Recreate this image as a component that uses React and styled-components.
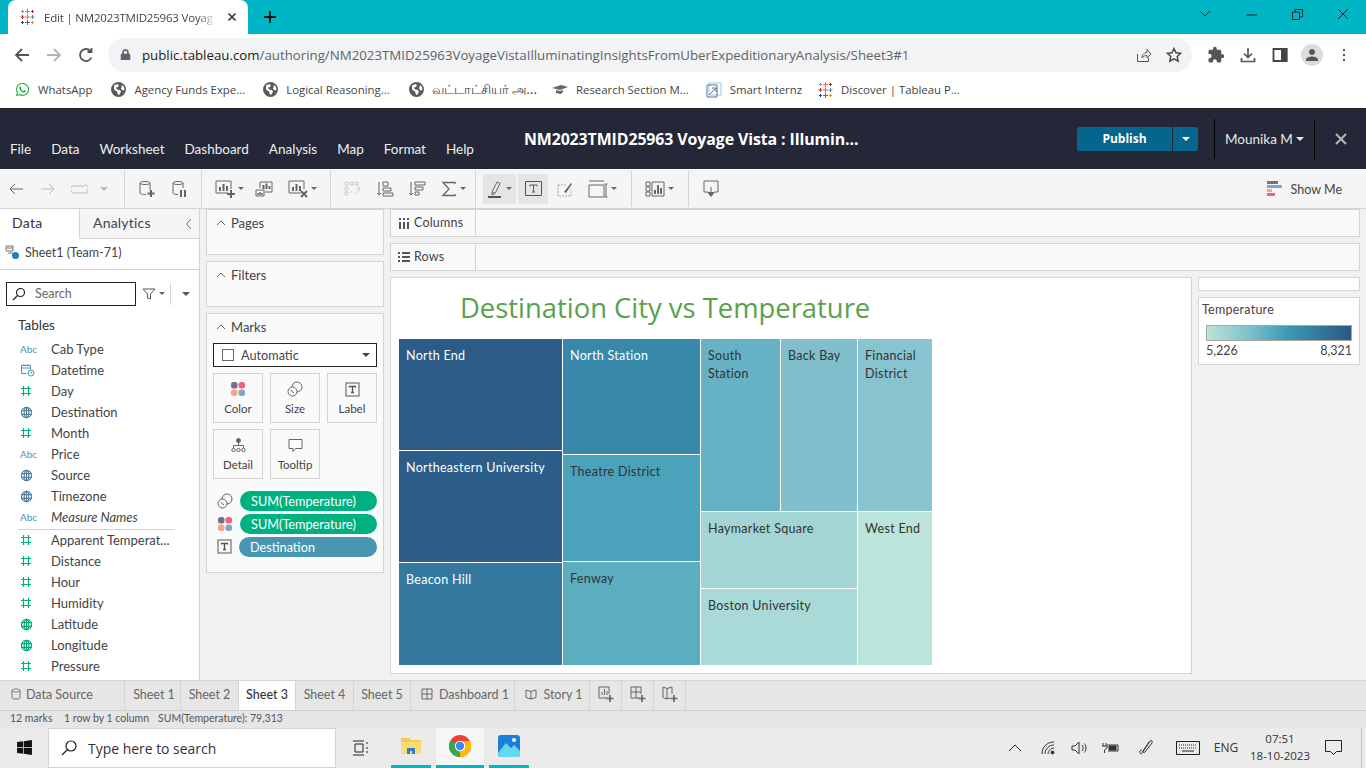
import React from 'react';
import styled, { createGlobalStyle } from 'styled-components';
import { FaWhatsapp, FaWindows, FaLock } from 'react-icons/fa';
import { MdExtension, MdPerson } from 'react-icons/md';

const Global = createGlobalStyle`
  html, body { margin: 0; padding: 0; height: 768px; overflow: hidden; background: #fff; }
  * { box-sizing: border-box; }
  body { font-family: "Lato", "Noto Sans", sans-serif; color: #333; }
`;

const Page = styled.div`
  width: 1366px;
  height: 768px;
  display: flex;
  flex-direction: column;
  overflow: hidden;
`;

/* browser chrome */
const TabStrip = styled.div`
  height: 34px;
  background: #00b5c4;
  display: flex;
  align-items: flex-end;
  padding-left: 8px;
`;
const BrowserTab = styled.div`
  width: 240px;
  height: 34px;
  background: #fff;
  border-radius: 8px 8px 0 0;
  display: flex;
  align-items: center;
  padding: 0 11px;
  font: 11.5px "Open Sans", sans-serif;
  letter-spacing: -0.2px;
  color: #444;
`;
const TabTitle = styled.span`
  margin-left: 9px;
  width: 172px;
  white-space: nowrap;
  mask-image: linear-gradient(to right, #000 90%, transparent);
`;
const TabClose = styled.span`
  margin-left: 11px;
  display: flex;
`;
const NewTab = styled.div`
  margin: 0 0 0 15px;
  height: 34px;
  display: flex;
  align-items: center;
`;
const WinButtons = styled.div`
  margin-left: auto;
  display: flex;
  align-items: center;
  height: 34px;
  padding-bottom: 6px;
`;
const WinBtn = styled.div`
  width: 46px;
  display: flex;
  justify-content: center;
`;
const UrlRow = styled.div`
  height: 40px;
  background: #fff;
  display: flex;
  align-items: center;
  padding: 2px 0 0 6px;
`;
const NavBtn = styled.div`
  width: 32px;
  display: flex;
  justify-content: center;
`;
const Omnibox = styled.div`
  margin-left: 6px;
  width: 1084px;
  height: 34px;
  border-radius: 17px;
  background: #f1f3f4;
  display: flex;
  align-items: center;
  padding: 0 10px 0 12px;
  font: 13.27px "Open Sans", sans-serif;
  color: #5f6368;
`;
const UrlHost = styled.span`
  margin-left: 11px;
  color: #222;
`;
const OmniIcons = styled.div`
  margin-left: auto;
  display: flex;
  gap: 14px;
  align-items: center;
`;
const BrowserIcons = styled.div`
  margin-left: 8px;
  display: flex;
  align-items: center;
`;
const Avatar = styled.div`
  width: 22px;
  height: 22px;
  border-radius: 50%;
  background: #dadce0;
  display: flex;
  align-items: center;
  justify-content: center;
`;
const Bookmarks = styled.div`
  height: 35px;
  background: #fff;
  display: flex;
  align-items: center;
  padding: 0 0 2px 15px;
  font: 11.4px "Open Sans", sans-serif;
  color: #444;
  border-bottom: 1px solid #222;
`;
const Bookmark = styled.div`
  display: flex;
  align-items: center;
  gap: 8px;
  margin-left: ${p => p.$ml || 0}px;
  white-space: nowrap;
`;
const TamilText = styled.span`
  font-family: "Noto Sans", "Open Sans", sans-serif;
  font-size: 13.4px;
`;

/* tableau header */
const Header = styled.header`
  height: 60px;
  background: #232738;
  display: flex;
  color: #fff;
`;
const Menu = styled.nav`
  display: flex;
  gap: 20px;
  padding: 32px 0 0 10px;
  font-size: 13.5px;
  color: #eee;
`;
const WorkbookTitle = styled.div`
  margin-left: 50px;
  padding-top: 19px;
  font: 700 15.9px "Open Sans", sans-serif;
  letter-spacing: -0.1px;
  white-space: nowrap;
`;
const HeaderRight = styled.div`
  margin-left: auto;
  display: flex;
  align-items: center;
`;
const Publish = styled.div`
  width: 95px;
  height: 24px;
  background: #05668d;
  border-radius: 2px 0 0 2px;
  font: 700 12px "Open Sans", sans-serif;
  display: flex;
  align-items: center;
  justify-content: center;
`;
const PublishArrow = styled.div`
  width: 25px;
  height: 24px;
  margin-left: 1px;
  background: #05668d;
  border-radius: 0 2px 2px 0;
  display: flex;
  align-items: center;
  justify-content: center;
`;
const HeaderSep = styled.div`
  width: 1px;
  height: 40px;
  background: #000;
  margin-left: ${p => p.$ml}px;
`;
const UserName = styled.div`
  margin-left: 10px;
  width: 89px;
  font-size: 13.5px;
  color: #e8e8e8;
  display: flex;
  align-items: center;
  gap: 3px;
`;
const CloseBtn = styled.div`
  width: 51px;
  display: flex;
  justify-content: center;
`;
const Caret = styled.span`
  display: inline-block;
  width: 0;
  height: 0;
  border-left: ${p => p.$s || 3}px solid transparent;
  border-right: ${p => p.$s || 3}px solid transparent;
  border-top: ${p => p.$s || 3}px solid ${p => p.$c || '#666'};
`;

/* toolbar */
const Toolbar = styled.div`
  height: 40px;
  padding-top: 1px;
  background: #f5f5f5;
  border-bottom: 1px solid #d4d4d4;
  display: flex;
  align-items: center;
`;
const ToolBtn = styled.div`
  width: ${p => p.$w}px;
  height: 30px;
  margin-left: ${p => p.$ml || 0}px;
  display: flex;
  align-items: center;
  justify-content: center;
  gap: 3px;
  background: ${p => (p.$on ? '#e5e5e5' : 'transparent')};
`;
const ToolSep = styled.div`
  width: 1px;
  height: 36px;
  background: #d4d4d4;
  margin-left: ${p => p.$ml}px;
`;
const ShowMe = styled.div`
  margin-left: auto;
  margin-right: 24px;
  padding-top: 1px;
  display: flex;
  align-items: center;
  gap: 9px;
  font-size: 12.5px;
  color: #444;
`;

/* main */
const Main = styled.div`
  height: 472px;
  background: #f1f1f1;
  display: flex;
`;
const DataPane = styled.aside`
  width: 200px;
  background: #fff;
  border-right: 1px solid #d4d4d4;
  overflow: hidden;
`;
const PaneTabs = styled.div`
  height: 30px;
  display: flex;
`;
const DataTab = styled.div`
  width: 80px;
  padding: 5px 0 0 12px;
  font-size: 14px;
  letter-spacing: 0.3px;
  color: #333;
  border-right: 1px solid #d4d4d4;
`;
const AnalyticsTab = styled.div`
  flex: 1;
  padding: 5px 6px 0 13px;
  font-size: 14px;
  letter-spacing: 0.2px;
  color: #444;
  background: #f5f5f5;
  border-bottom: 1px solid #d4d4d4;
  display: flex;
  justify-content: space-between;
  align-items: flex-start;
`;
const CollapseIcon = styled.span`
  display: flex;
  padding-top: 4px;
`;
const SourceRow = styled.div`
  height: 31px;
  border-bottom: 1px solid #d4d4d4;
  display: flex;
  align-items: center;
  gap: 5px;
  padding: 0 0 2px 5px;
  font-size: 12.5px;
  color: #444;
`;
const SearchRow = styled.div`
  display: flex;
  align-items: center;
  margin: 12px 0 0 6px;
`;
const SearchBox = styled.div`
  width: 130px;
  height: 24px;
  border: 1px solid #222;
  display: flex;
  align-items: center;
  gap: 9px;
  padding-left: 5px;
  font-size: 12.5px;
  color: #666;
`;
const SearchTools = styled.div`
  display: flex;
  align-items: center;
  margin-left: 6px;
  gap: 3px;
`;
const SearchSep = styled.div`
  width: 1px;
  height: 22px;
  background: #d4d4d4;
  margin: 0 8px 0 2px;
`;
const TablesTitle = styled.div`
  margin: 10px 0 5px 18px;
  font-size: 13.5px;
  color: #333;
  line-height: 18px;
`;
const FieldRow = styled.div`
  height: 21px;
  display: flex;
  align-items: center;
  font-size: 13px;
  font-style: ${p => (p.$italic ? 'italic' : 'normal')};
  color: #444;
  white-space: nowrap;
`;
const FieldIcon = styled.div`
  width: 51px;
  padding-left: 20px;
  display: flex;
  align-items: center;
`;
const AbcMark = styled.span`
  font-size: 10px;
  font-style: normal;
  color: #4e95b3;
`;
const FieldDivider = styled.div`
  height: 1px;
  margin: 1px 24px 0 18px;
  background: #d4d4d4;
`;

/* cards */
const Cards = styled.div`
  width: 190px;
  padding: 0 6px;
  display: flex;
  flex-direction: column;
  gap: 6px;
`;
const Card = styled.section`
  background: #fafafa;
  border: 1px solid #d4d4d4;
  height: ${p => p.$h}px;
`;
const CardTitle = styled.div`
  height: 26px;
  display: flex;
  align-items: center;
  gap: 5px;
  padding: 0 0 0 9px;
  font-size: 13px;
  color: #444;
`;
const MarkSelect = styled.div`
  height: 24px;
  margin: 3px 6px 0;
  border: 1px solid #222;
  background: #fff;
  display: flex;
  align-items: center;
  padding: 0 6px 0 8px;
  font-size: 12.7px;
  color: #444;
`;
const CheckBox = styled.span`
  width: 12px;
  height: 12px;
  border: 1px solid #666;
  margin-right: 7px;
`;
const SelectCaret = styled.span`
  margin-left: auto;
  display: flex;
`;
const MarkGrid = styled.div`
  display: grid;
  grid-template-columns: repeat(3, 50px);
  grid-auto-rows: 50px;
  gap: 6px 7px;
  margin: 6px 6px 0;
`;
const MarkBtn = styled.div`
  border: 1px solid #d4d4d4;
  display: flex;
  flex-direction: column;
  align-items: center;
  justify-content: flex-end;
  gap: 5px;
  padding-bottom: 7px;
  font-size: 11.5px;
  color: #444;
`;
const PillRows = styled.div`
  margin: 12px 6px 0 10px;
  display: flex;
  flex-direction: column;
  gap: 3px;
`;
const PillRow = styled.div`
  display: flex;
  align-items: center;
  gap: 7px;
`;
const Pill = styled.div`
  flex: 1;
  height: 20px;
  border-radius: 10px;
  background: ${p => p.$bg};
  color: #fff;
  font-size: 12.7px;
  line-height: 20px;
  padding-left: 11px;
`;

/* view */
const ViewArea = styled.div`
  width: 976px;
  display: flex;
  flex-direction: column;
  gap: 6px;
`;
const Shelf = styled.div`
  width: 970px;
  height: 28px;
  background: #fafafa;
  border: 1px solid #d4d4d4;
  display: flex;
`;
const ShelfLabel = styled.div`
  width: 85px;
  border-right: 1px solid #d4d4d4;
  display: flex;
  align-items: center;
  gap: 4px;
  padding-left: 7px;
  font-size: 12.5px;
  letter-spacing: 0.2px;
  color: #444;
`;
const ViewRow = styled.div`
  display: flex;
  gap: 6px;
  height: 397px;
`;
const Canvas = styled.div`
  width: 802px;
  background: #fff;
  border: 1px solid #d4d4d4;
`;
const ChartTitle = styled.h1`
  margin: 0;
  height: 61px;
  padding: 12px 0 0 69px;
  font: 400 27.4px/36px "Open Sans", sans-serif;
  color: #59a14f;
  white-space: nowrap;
`;
const Treemap = styled.div`
  margin-left: 8px;
  width: 533px;
  height: 326px;
  display: flex;
  gap: 1px;
`;
const TreeStack = styled.div`
  display: flex;
  flex-direction: ${p => (p.$row ? 'row' : 'column')};
  gap: 1px;
  width: ${p => (p.$w ? `${p.$w}px` : 'auto')};
  height: ${p => (p.$h ? `${p.$h}px` : 'auto')};
`;
const TreeCell = styled.div`
  width: ${p => (p.$w ? `${p.$w}px` : 'auto')};
  height: ${p => (p.$h ? `${p.$h}px` : 'auto')};
  background: ${p => p.$bg};
  color: ${p => (p.$light ? '#fff' : '#333')};
  padding: 8px 4px 0 7px;
  font-size: 12.5px;
  letter-spacing: 0.3px;
  line-height: 18px;
`;
const LegendCol = styled.div`
  width: 162px;
  display: flex;
  flex-direction: column;
  gap: 6px;
`;
const LegendBlank = styled.div`
  height: 14px;
  background: #fff;
  border: 1px solid #d4d4d4;
`;
const Legend = styled.div`
  height: 68px;
  background: #fff;
  border: 1px solid #d4d4d4;
  padding: 4px 7px 0 3px;
  font-size: 12.5px;
  letter-spacing: 0.25px;
  color: #444;
`;
const LegendBar = styled.div`
  height: 16px;
  margin: 8px 0 2px 4px;
  border: 1px solid #a8a89c;
  background: linear-gradient(to right, #bce4d8, #7dbfc9 30%, #3f9ab7 55%, #2a5783);
`;
const LegendScale = styled.div`
  display: flex;
  justify-content: space-between;
  margin-left: 4px;
  font-size: 12.5px;
  letter-spacing: 0;
`;

/* bottom */
const SheetTabs = styled.div`
  height: 31px;
  background: #e6e6e6;
  border-top: 1px solid #d4d4d4;
  border-bottom: 1px solid #cfcfcf;
  display: flex;
`;
const SheetTab = styled.div`
  width: ${p => p.$w}px;
  display: flex;
  align-items: center;
  justify-content: ${p => (p.$left ? 'flex-start' : 'center')};
  gap: ${p => (p.$left ? 5 : 6)}px;
  padding: 0 0 3px ${p => p.$pl || 0}px;
  font-size: 12.5px;
  white-space: nowrap;
  color: ${p => (p.$active ? '#333' : '#666')};
  background: ${p => (p.$active ? '#fff' : 'transparent')};
  border-right: 1px solid #d4d4d4;
  font-weight: ${p => (p.$active ? 500 : 400)};
`;
const StatusBar = styled.div`
  height: 17px;
  background: #e6e6e6;
  display: flex;
  align-items: center;
  font-size: 10.5px;
  color: #555;
  padding: 0 0 2px 10px;
`;
const StatusItem = styled.span`
  width: ${p => p.$w}px;
  white-space: nowrap;
`;
const Taskbar = styled.div`
  height: 40px;
  background: #ebebeb;
  display: flex;
  align-items: stretch;
`;
const StartBtn = styled.div`
  width: 48px;
  display: flex;
  align-items: center;
  justify-content: center;
`;
const TaskSearch = styled.div`
  width: 288px;
  background: #fff;
  border: 1px solid #d4d4d4;
  display: flex;
  align-items: center;
  gap: 11px;
  padding: 1px 0 0 12px;
  font: 13.95px "Open Sans", sans-serif;
  color: #333;
`;
const TaskIcon = styled.div`
  width: ${p => p.$w}px;
  margin-left: ${p => p.$ml || 0}px;
  display: flex;
  align-items: center;
  justify-content: center;
  background: ${p => (p.$on ? '#f6f6f6' : 'transparent')};
  border-bottom: ${p => (p.$open ? '3px solid #00b5c4' : '0')};
`;
const Tray = styled.div`
  margin-left: auto;
  display: flex;
  align-items: center;
  font: 12px "Open Sans", sans-serif;
  color: #333;
`;
const TrayIcon = styled.div`
  width: ${p => p.$w}px;
  margin-right: ${p => p.$mr || 0}px;
  display: flex;
  justify-content: center;
`;
const Clock = styled.div`
  width: 72px;
  text-align: center;
  font-size: 11.5px;
  line-height: 17px;
  padding-bottom: 2px;
`;
const ShowDesktop = styled.div`
  width: 5px;
  height: 40px;
  margin-left: 11px;
  border-left: 1px solid #c4c4c4;
`;

/* drawings */
const TableauMark = ({ s = 16 }) => (
  <svg width={s} height={s} viewBox="0 0 16 16" strokeWidth="1" fill="none">
    <path d="M8.500 0v5M6 2.500h5" stroke="#e8762b" />
    <path d="M8.500 11v5M6 13.500h5" stroke="#5b6591" />
    <path d="M3.500 6v4M1.500 8h4" stroke="#c72035" />
    <path d="M13.500 6v4M11.500 8h4" stroke="#59879b" />
    <path d="M8.500 5.500v5M6 8h5" stroke="#e8762b" />
    <path d="M3.500 12v3M2 13.500h3" stroke="#1f447e" />
    <path d="M13.500 12v3M12 13.500h3" stroke="#eb912b" />
    <path d="M3.500 1v3M2 2.500h3" stroke="#7099a6" />
    <path d="M13.500 1v3M12 2.500h3" stroke="#c72035" />
  </svg>
);
const Ico = ({ w = 16, h = 16, vb, c = '#666', sw = 1, children }) => (
  <svg width={w} height={h} viewBox={vb || `0 0 ${w} ${h}`} fill="none" stroke={c} strokeWidth={sw}>{children}</svg>
);
const Globe = ({ c = '#555', s = 14 }) => (
  <svg width={s} height={s} viewBox="0 0 14 14" fill="none" stroke={c} strokeWidth="1.2">
    <circle cx="7" cy="7" r="5.5" />
    <ellipse cx="7" cy="7" rx="2.500" ry="5.500" />
    <path d="M1.500 5h11M1.500 9h11M7 1.500v11" />
  </svg>
);
const FilledGlobe = () => (
  <svg width="15" height="15" viewBox="0 0 15 15">
    <circle cx="7.500" cy="7.500" r="7.500" fill="#5a5a5a" />
    <path d="M3 3.500l3-1.500 2 1-1 2-2 .5 1 2 3 .5 1 2-2 3-1-.5-1-3-3-2zM11 3l2 2 .5 3-2 .5-1.500-2z" fill="#fff" />
  </svg>
);
const Hash = () => (
  <Ico w={12} h={12} c="#00b180" sw={1.2}><path d="M3.500 1v10M8.500 1v10M1 3.500h10M1 8.500h10" /></Ico>
);
const Calendar = () => (
  <Ico w={15} h={14} c="#4e95b3">
    <path d="M1.500 2.500h9v4M1.500 2.500v8h5M1.500 5h9M4 1v2M8 1v2" />
    <circle cx="11" cy="10" r="3" />
    <path d="M11 8.500V10h1.500" />
  </Ico>
);
const FourDots = () => (
  <svg width="16" height="16" viewBox="0 0 16 16">
    <rect x="1" y="1" width="6.500" height="6.500" rx="2.500" fill="#7b6a94" />
    <rect x="8.500" y="1" width="6.500" height="6.500" rx="2.500" fill="#f0637a" />
    <rect x="1" y="8.500" width="6.500" height="6.500" rx="2.500" fill="#f5a77a" />
    <rect x="8.500" y="8.500" width="6.500" height="6.500" rx="2.500" fill="#7fa5cf" />
  </svg>
);
const SizeIcon = () => (
  <Ico w={16} h={16} c="#666">
    <circle cx="10" cy="6" r="5" />
    <circle cx="5.500" cy="10.500" r="4.500" fill="#fafafa" />
    <path d="M3.500 9l3.500 3" />
  </Ico>
);
const LabelIcon = () => (
  <svg width="15" height="15" viewBox="0 0 15 15" fill="none" stroke="#555">
    <rect x="1" y="1" width="13" height="13" />
    <path d="M4.500 5.500v-1h6v1M7.500 4.500v6M6 10.500h3" strokeWidth="1.300" />
  </svg>
);
const ChevUp = () => (
  <Ico w={10} h={6} c="#666"><path d="M1 5l4-4 4 4" /></Ico>
);
const BarsBox = ({ plus, cross }) => (
  <Ico w={20} h={20} c="#666">
    <path d="M13 14H1V2h15v8" />
    <path d="M5 12V8M8.500 12V5M12 12V7" strokeWidth="2" />
    {plus && <path d="M16 11v8M12 15h8" strokeWidth="2" />}
    {cross && <path d="M13 12l6 6M19 12l-6 6" strokeWidth="2" />}
  </Ico>
);

const fields = [
  ['abc', 'Cab Type'], ['cal', 'Datetime'], ['hash', 'Day'], ['geo', 'Destination'], ['hash', 'Month'],
  ['abc', 'Price'], ['geo', 'Source'], ['geo', 'Timezone'], ['abc', 'Measure Names', true], ['div'],
  ['hash', 'Apparent Temperat...'], ['hash', 'Distance'], ['hash', 'Hour'], ['hash', 'Humidity'],
  ['geoG', 'Latitude'], ['geoG', 'Longitude'], ['hash', 'Pressure'],
];
const menuItems = ['File', 'Data', 'Worksheet', 'Dashboard', 'Analysis', 'Map', 'Format', 'Help'];

function fieldIcon(kind) {
  if (kind === 'abc') return <AbcMark>Abc</AbcMark>;
  if (kind === 'cal') return <Calendar />;
  if (kind === 'hash') return <Hash />;
  if (kind === 'geo') return <Globe c="#4e7f9b" s={13} />;
  return <Globe c="#00a77a" s={13} />;
}

function BrowserChrome() {
  return (
    <>
      <TabStrip>
        <BrowserTab>
          <TableauMark />
          <TabTitle>Edit | NM2023TMID25963 Voyag</TabTitle>
          <TabClose>
            <Ico w={10} h={10} c="#333" sw={1.6}><path d="M1.500 1.500l7 7M8.500 1.500l-7 7" /></Ico>
          </TabClose>
        </BrowserTab>
        <NewTab>
          <Ico w={14} h={14} c="#111" sw={1.8}><path d="M7 1v12M1 7h12" /></Ico>
        </NewTab>
        <WinButtons>
          <WinBtn><Ico w={12} h={8} c="#333"><path d="M1 1l5 5 5-5" /></Ico></WinBtn>
          <WinBtn><Ico w={11} h={11} c="#222"><path d="M0 6h11" /></Ico></WinBtn>
          <WinBtn><Ico w={11} h={11} c="#222"><path d="M.5 3h7v7.500h-7zM3 3V.5h7.500V8H8" /></Ico></WinBtn>
          <WinBtn><Ico w={12} h={12} c="#222"><path d="M1 1l10 10M11 1L1 11" /></Ico></WinBtn>
        </WinButtons>
      </TabStrip>
      <UrlRow>
        <NavBtn><Ico w={16} h={16} c="#555" sw={1.8}><path d="M15 8H2M8 2L2 8l6 6" /></Ico></NavBtn>
        <NavBtn><Ico w={16} h={16} c="#b5b5b5" sw={1.8}><path d="M1 8h13M8 2l6 6-6 6" /></Ico></NavBtn>
        <NavBtn><Ico w={16} h={16} c="#555" sw={1.8}><path d="M13.500 10.500A6 6 0 1 1 12.500 4M13.500 1v4h-4" /></Ico></NavBtn>
        <Omnibox>
          <FaLock size={11} color="#5f6368" />
          <UrlHost>public.tableau.com</UrlHost>/authoring/NM2023TMID25963VoyageVistaIlluminatingInsightsFromUberExpeditionaryAnalysis/Sheet3#1
          <OmniIcons>
            <Ico w={16} h={16} c="#555"><path d="M1.500 7v7.500h11V11M6 11c0-4 3-5.500 5-5.500V2.500l4 4.500-4 4V8.500c-2 0-4 .5-5 2.500z" /></Ico>
            <Ico w={16} h={16} c="#444" sw={1.4}><path d="M8 1.500l2 4.300 4.700.5-3.500 3.200 1 4.600L8 11.800l-4.200 2.300 1-4.600L1.300 6.300 6 5.800z" /></Ico>
          </OmniIcons>
        </Omnibox>
        <BrowserIcons>
          <NavBtn><MdExtension size={18} color="#555" /></NavBtn>
          <NavBtn><Ico w={16} h={16} c="#555" sw={1.700}><path d="M8 1v9M4 6.500L8 10.500l4-4M1.500 11v3.500h13V11" /></Ico></NavBtn>
          <NavBtn><Ico w={16} h={16} c="#444" sw={1.800}><path d="M1.500 2h13v12h-13zM10 2v12" /><path d="M10 2h4.500v12H10z" fill="#444" /></Ico></NavBtn>
          <NavBtn><Avatar><MdPerson size={18} color="#555" /></Avatar></NavBtn>
          <NavBtn><Ico w={14} h={16} c="#555" sw={2}><path d="M7 2v2M7 7v2M7 12v2" /></Ico></NavBtn>
        </BrowserIcons>
      </UrlRow>
      <Bookmarks>
        <Bookmark><FaWhatsapp size={15} color="#25b04a" />WhatsApp</Bookmark>
        <Bookmark $ml={19}><FilledGlobe />Agency Funds Expe...</Bookmark>
        <Bookmark $ml={18}><FilledGlobe />Logical Reasoning...</Bookmark>
        <Bookmark $ml={19}><FilledGlobe /><TamilText>வட்டாட்சியர் அ...</TamilText></Bookmark>
        <Bookmark $ml={15}>
          <svg width="16" height="12" viewBox="0 0 16 12"><path d="M0 4l9-3 7 2-8 3zM4 6v3l5 1 2-2V6L8 7z" fill="#666" /></svg>
          Research Section M...
        </Bookmark>
        <Bookmark $ml={17}>
          <svg width="16" height="16" viewBox="0 0 16 16" fill="none"><rect x="3" y="1" width="12" height="12" stroke="#8fcbe8" /><path d="M1 3h10v12H1zM3 13l7-7M6 6h4v4" stroke="#5671a8" /></svg>
          Smart Internz
        </Bookmark>
        <Bookmark $ml={15}><TableauMark />Discover | Tableau P...</Bookmark>
      </Bookmarks>
    </>
  );
}

function TableauHeader() {
  return (
    <Header>
      <Menu>{menuItems.map(m => <span key={m}>{m}</span>)}</Menu>
      <WorkbookTitle>NM2023TMID25963 Voyage Vista : Illumin...</WorkbookTitle>
      <HeaderRight>
        <Publish>Publish</Publish>
        <PublishArrow><Caret $s={4} $c="#fff" /></PublishArrow>
        <HeaderSep $ml={16} />
        <UserName>Mounika M <Caret $s={4} $c="#e8e8e8" /></UserName>
        <HeaderSep $ml={0} />
        <CloseBtn>
          <Ico w={12} h={12} c="#b8b8b8" sw={2}><path d="M1 1l10 10M11 1L1 11" /></Ico>
        </CloseBtn>
      </HeaderRight>
    </Header>
  );
}

function TopToolbar() {
  return (
    <Toolbar>
      <ToolBtn $w={32}><Ico w={14} h={12} c="#666"><path d="M14 6H1M6 1L1 6l5 5" /></Ico></ToolBtn>
      <ToolBtn $w={32}><Ico w={14} h={12} c="#bbb"><path d="M0 6h13M8 1l5 5-5 5" /></Ico></ToolBtn>
      <ToolBtn $w={32}><Ico w={19} h={12} c="#bbb"><path d="M14 3H3a2.500 2.500 0 0 0 0 7h13V6M14 1l3 3" /></Ico></ToolBtn>
      <ToolBtn $w={16}><Caret $s={4} $c="#bbb" /></ToolBtn>
      <ToolSep $ml={12} />
      <ToolBtn $w={32} $ml={6}>
        <Ico w={18} h={18} c="#666"><path d="M2 3c0-2 10-2 10 0v7M2 3c0 2 10 2 10 0M2 3v10c0 1 2 1.500 6 1.500" /><path d="M13 10v7M9.500 13.500h7" strokeWidth="2" /></Ico>
      </ToolBtn>
      <ToolBtn $w={32}>
        <Ico w={16} h={18} c="#666"><path d="M2 3c0-2 10-2 10 0v5M2 3c0 2 10 2 10 0M2 3v10c0 1 2 1.500 5 1.500" /><path d="M10 10v7M14 10v7" strokeWidth="2" /></Ico>
      </ToolBtn>
      <ToolSep $ml={6} />
      <ToolBtn $w={29} $ml={13}><BarsBox plus /><Caret /></ToolBtn>
      <ToolBtn $w={32} $ml={4}>
        <Ico w={18} h={16} c="#666"><path d="M5 7V1h12v10h-7" /><path d="M8.500 8V4M11.500 8V2.500M14.500 8V5" strokeWidth="2" /><path d="M1 9h8v6H1z" /><path d="M3 14v-2M5 14v-3M7 14v-2" strokeWidth="1.500" /></Ico>
      </ToolBtn>
      <ToolBtn $w={29} $ml={8}><BarsBox cross /><Caret /></ToolBtn>
      <ToolSep $ml={13} />
      <ToolBtn $w={30} $ml={7}>
        <Ico w={18} h={16} c="#ccc"><path d="M1 1h3v3H1zM6 1h3v3H6zM11 1h3v3h-3zM1 6h3v3H1zM1 11h3v3H1zM6 11h2" /><path d="M15 7a5 5 0 0 1-4 6M14 5l2 2.500-3 .5" /></Ico>
      </ToolBtn>
      <ToolBtn $w={30} $ml={2}>
        <Ico w={18} h={16} c="#666"><path d="M3 1v13M1 12l2 2 2-2" /><path d="M7 1h5v4H7zM7 7h8v3H7zM7 12h10v3H7z" /></Ico>
      </ToolBtn>
      <ToolBtn $w={30} $ml={2}>
        <Ico w={18} h={16} c="#666"><path d="M3 1v13M1 12l2 2 2-2" /><path d="M7 1h10v3H7zM7 6h8v3H7zM7 11h4v3H7z" /></Ico>
      </ToolBtn>
      <ToolBtn $w={25} $ml={9}>
        <Ico w={16} h={16} c="#666" sw={1.300}><path d="M14 3V1.500H2L8 8l-6 6.500h12V13" /></Ico>
        <Caret />
      </ToolBtn>
      <ToolSep $ml={9} />
      <ToolBtn $w={33} $ml={7} $on>
        <Ico w={16} h={18} c="#666"><path d="M5 12L10 2l3 1.500-5 10-3 1.500zM5 12l3 1.500" /><path d="M1 17h13" strokeWidth="2" stroke="#555" /></Ico>
        <Caret />
      </ToolBtn>
      <ToolBtn $w={30} $ml={2} $on>
        <Ico w={17} h={15} c="#555"><path d="M.5.5h16v14H.5z" /><path d="M5 5.500V4h7v1.500M8.500 4v7M7 11h3" /></Ico>
      </ToolBtn>
      <ToolBtn $w={30} $ml={2}>
        <svg width="16" height="16" viewBox="0 0 16 16" fill="none"><path d="M1 4h9M1 4v11h13V8" stroke="#aaa" strokeDasharray="2 1" /><path d="M7 11l7-9 1 1-6 9z" fill="#666" /></svg>
      </ToolBtn>
      <ToolBtn $w={29} $ml={8}>
        <Ico w={20} h={18} c="#666"><path d="M1 1h15M1 5h15v12H1zM18 4v13M16.500 4h3M16.500 17h3" /></Ico>
        <Caret />
      </ToolBtn>
      <ToolSep $ml={14} />
      <ToolBtn $w={29} $ml={13}>
        <Ico w={20} h={16} c="#666"><path d="M1 1h4v4H1zM1 6h4v4H1zM1 11h4v4H1zM7 1h12v14H7z" /><path d="M10 13V9M13 13V4M16 13V7" strokeWidth="2" /></Ico>
        <Caret />
      </ToolBtn>
      <ToolSep $ml={14} />
      <ToolBtn $w={32} $ml={6}>
        <Ico w={16} h={17} c="#666"><path d="M5 12H1V1h14v11h-4" /><path d="M8 7v9" /><path d="M5 12.500h6L8 16.500z" fill="#666" /></Ico>
      </ToolBtn>
      <ShowMe>
        <svg width="15" height="16" viewBox="0 0 15 16">
          <rect y="0" width="11" height="3" fill="#7b6a94" />
          <rect y="4" width="15" height="3" fill="#7fa5cf" />
          <rect y="8" width="5" height="3" fill="#f5a77a" />
          <rect y="12" width="8" height="3" fill="#f0637a" />
        </svg>
        Show Me
      </ShowMe>
    </Toolbar>
  );
}

function DataPanel() {
  return (
    <DataPane>
      <PaneTabs>
        <DataTab>Data</DataTab>
        <AnalyticsTab>
          Analytics
          <CollapseIcon>
            <Ico w={8} h={12} vb="0 0 8 12" c="#666"><path d="M6 1L1.500 6 6 11" /></Ico>
          </CollapseIcon>
        </AnalyticsTab>
      </PaneTabs>
      <SourceRow>
        <svg width="15" height="15" viewBox="0 0 15 15" fill="none">
          <path d="M1 1h7v5H1zM1 3h7M3 8h5" stroke="#777" />
          <circle cx="10.500" cy="10.500" r="3.500" fill="#2d7ab5" />
        </svg>
        Sheet1 (Team-71)
      </SourceRow>
      <SearchRow>
        <SearchBox>
          <Ico w={14} h={14} c="#222" sw={1.200}><circle cx="8.500" cy="5.500" r="4" /><path d="M5.500 8.500L1 13" /></Ico>
          Search
        </SearchBox>
        <SearchTools>
          <Ico w={14} h={12} c="#555"><path d="M1 1h12L8.500 6v5l-3-1V6z" /></Ico>
          <Caret />
          <SearchSep />
          <Caret $s={4} $c="#555" />
        </SearchTools>
      </SearchRow>
      <TablesTitle>Tables</TablesTitle>
      {fields.map(([kind, name, italic]) =>
        kind === 'div'
          ? <FieldDivider key="divider" />
          : (
            <FieldRow key={name} $italic={italic}>
              <FieldIcon>{fieldIcon(kind)}</FieldIcon>
              {name}
            </FieldRow>
          )
      )}
    </DataPane>
  );
}

function MarksCards() {
  return (
    <Cards>
      <Card $h={46}><CardTitle><ChevUp />Pages</CardTitle></Card>
      <Card $h={46}><CardTitle><ChevUp />Filters</CardTitle></Card>
      <Card $h={260}>
        <CardTitle><ChevUp />Marks</CardTitle>
        <MarkSelect>
          <CheckBox />
          Automatic
          <SelectCaret><Caret $s={4} $c="#444" /></SelectCaret>
        </MarkSelect>
        <MarkGrid>
          <MarkBtn><FourDots />Color</MarkBtn>
          <MarkBtn><SizeIcon />Size</MarkBtn>
          <MarkBtn><LabelIcon />Label</MarkBtn>
          <MarkBtn>
            <Ico w={15} h={15} c="#666">
              <circle cx="7.500" cy="2.500" r="2" fill="#666" />
              <path d="M7.500 4v4M2.500 10V7.500h10V10" />
              <circle cx="2.500" cy="12" r="1.700" /><circle cx="7.500" cy="12" r="1.700" /><circle cx="12.500" cy="12" r="1.700" />
            </Ico>
            Detail
          </MarkBtn>
          <MarkBtn>
            <Ico w={15} h={15} c="#666"><path d="M1 1.500h13v9H7.500L5 13.500v-3H1z" /></Ico>
            Tooltip
          </MarkBtn>
        </MarkGrid>
        <PillRows>
          <PillRow><SizeIcon /><Pill $bg="#00b180">SUM(Temperature)</Pill></PillRow>
          <PillRow><FourDots /><Pill $bg="#00b180">SUM(Temperature)</Pill></PillRow>
          <PillRow><LabelIcon /><Pill $bg="#4996b2">Destination</Pill></PillRow>
        </PillRows>
      </Card>
    </Cards>
  );
}

function ChartView() {
  return (
    <ViewArea>
      <Shelf>
        <ShelfLabel>
          <Ico w={12} h={12} c="#555" sw={2}><path d="M2 1v2M2 5v7M6 1v2M6 5v7M10 1v2M10 5v7" /></Ico>
          Columns
        </ShelfLabel>
      </Shelf>
      <Shelf>
        <ShelfLabel>
          <Ico w={12} h={12} c="#555" sw={2}><path d="M0 2h2M4 2h8M0 6h2M4 6h8M0 10h2M4 10h8" /></Ico>
          Rows
        </ShelfLabel>
      </Shelf>
      <ViewRow>
        <Canvas>
          <ChartTitle>Destination City vs Temperature</ChartTitle>
          <Treemap>
            <TreeStack $w={163}>
              <TreeCell $h={111} $bg="#2b5b87" $light>North End</TreeCell>
              <TreeCell $h={111} $bg="#2c5e89" $light>Northeastern University</TreeCell>
              <TreeCell $h={102} $bg="#34789f" $light>Beacon Hill</TreeCell>
            </TreeStack>
            <TreeStack $w={137}>
              <TreeCell $h={115} $bg="#3788a9" $light>North Station</TreeCell>
              <TreeCell $h={106} $bg="#4ba3bb">Theatre District</TreeCell>
              <TreeCell $h={103} $bg="#5cadc0">Fenway</TreeCell>
            </TreeStack>
            <TreeStack $w={231}>
              <TreeStack $row $h={172}>
                <TreeCell $w={79} $bg="#66b1c3">South Station</TreeCell>
                <TreeCell $w={76} $bg="#80bfcb">Back Bay</TreeCell>
                <TreeCell $w={74} $bg="#88c4cf">Financial District</TreeCell>
              </TreeStack>
              <TreeStack $row $h={153}>
                <TreeStack $w={156}>
                  <TreeCell $h={76} $bg="#a4d5d5">Haymarket Square</TreeCell>
                  <TreeCell $h={76} $bg="#a9dad7">Boston University</TreeCell>
                </TreeStack>
                <TreeCell $w={74} $bg="#bbe4da">West End</TreeCell>
              </TreeStack>
            </TreeStack>
          </Treemap>
        </Canvas>
        <LegendCol>
          <LegendBlank />
          <Legend>
            Temperature
            <LegendBar />
            <LegendScale><span>5,226</span><span>8,321</span></LegendScale>
          </Legend>
        </LegendCol>
      </ViewRow>
    </ViewArea>
  );
}

function BottomBars() {
  return (
    <>
      <SheetTabs>
        <SheetTab $w={125} $left $pl={11}>
          <Ico w={10} h={12} c="#777"><path d="M1 2.500c0-2 8-2 8 0v7c0 2-8 2-8 0zM1 2.500c0 2 8 2 8 0" /></Ico>
          Data Source
        </SheetTab>
        <SheetTab $w={56} $pl={3}>Sheet 1</SheetTab>
        <SheetTab $w={58}>Sheet 2</SheetTab>
        <SheetTab $w={57} $active>Sheet 3</SheetTab>
        <SheetTab $w={58}>Sheet 4</SheetTab>
        <SheetTab $w={57}>Sheet 5</SheetTab>
        <SheetTab $w={104} $pl={5}>
          <Ico w={12} h={12} c="#666"><path d="M1 1h10v10H1zM6 1v10M1 6h10" /></Ico>
          Dashboard 1
        </SheetTab>
        <SheetTab $w={75} $pl={4}>
          <Ico w={12} h={12} c="#666"><path d="M1 2l5 1.500V11L1 9.500zM6 3.500L11 2v7.500L6 11" /></Ico>
          Story 1
        </SheetTab>
        <SheetTab $w={32}>
          <Ico w={16} h={16} c="#666"><path d="M9 12H1V1h10v7" /><path d="M4 9V6M6.500 9V3M9 9V5" /><path d="M12 9v7M8.500 12.500h7" strokeWidth="1.700" /></Ico>
        </SheetTab>
        <SheetTab $w={32}>
          <Ico w={16} h={16} c="#666"><path d="M9 12H1V1h10v7M6 1v11M1 6h10" /><path d="M12 9v7M8.500 12.500h7" strokeWidth="1.700" /></Ico>
        </SheetTab>
        <SheetTab $w={32}>
          <Ico w={16} h={16} c="#666"><path d="M1 1l4 1.500V13L1 11.500zM5 2.500L10 1v7M5 13l3-1" /><path d="M12 9v7M8.500 12.500h7" strokeWidth="1.700" /></Ico>
        </SheetTab>
      </SheetTabs>
      <StatusBar>
        <StatusItem $w={54}>12 marks</StatusItem>
        <StatusItem $w={94}>1 row by 1 column</StatusItem>
        <StatusItem $w={160}>SUM(Temperature): 79,313</StatusItem>
      </StatusBar>
      <Taskbar>
        <StartBtn><FaWindows size={17} color="#111" /></StartBtn>
        <TaskSearch>
          <Ico w={16} h={16} c="#222" sw={1.200}><circle cx="10" cy="6" r="5" /><path d="M6.500 9.500L1 15" /></Ico>
          Type here to search
        </TaskSearch>
        <TaskIcon $w={48}>
          <Ico w={16} h={16} c="#222"><path d="M1 1h11M1 15h11M3 4h8v8H3zM14 3h2M14 8h2M14 12h2" /></Ico>
        </TaskIcon>
        <TaskIcon $w={40} $ml={7} $open>
          <svg width="22" height="20" viewBox="0 0 22 20">
            <path d="M1 2h8l2 2h10v14H1z" fill="#f6c94f" />
            <path d="M1 6h20v12H1z" fill="#fbdb74" />
            <path d="M7 12h8v6h-3v-3h-2v3H7z" fill="#2f7fc1" />
          </svg>
        </TaskIcon>
        <TaskIcon $w={48} $ml={5} $on $open>
          <svg width="24" height="24" viewBox="0 0 24 24">
            <circle cx="12" cy="12" r="11" fill="#ea4335" />
            <path d="M12 12L2.500 6.500A11 11 0 0 0 12 23z" fill="#34a853" />
            <path d="M12 12v11A11 11 0 0 0 22 7H12z" fill="#fbbc05" />
            <circle cx="12" cy="12" r="5.200" fill="#fff" />
            <circle cx="12" cy="12" r="4.200" fill="#4285f4" />
          </svg>
        </TaskIcon>
        <TaskIcon $w={40} $ml={5} $open>
          <svg width="22" height="22" viewBox="0 0 22 22">
            <rect width="22" height="22" rx="3" fill="#1b7fd8" />
            <path d="M0 18l8-10 5 5 3-3 6 6v3a3 3 0 0 1-3 3H3a3 3 0 0 1-3-3z" fill="#64d8f0" />
            <circle cx="16" cy="5" r="2" fill="#fff" />
          </svg>
        </TaskIcon>
        <Tray>
          <TrayIcon $w={26} $mr={4}><Ico w={14} h={8} c="#222"><path d="M1 7l6-6 6 6" /></Ico></TrayIcon>
          <TrayIcon $w={32}><Ico w={14} h={14} c="#333"><path d="M1 13C1 6 6 1 13 1M4 13c0-5 4-9 9-9M7 13c0-3 3-6 6-6" /><circle cx="11.500" cy="11.500" r="1.500" fill="#333" /></Ico></TrayIcon>
          <TrayIcon $w={30}><Ico w={17} h={14} c="#333"><path d="M1 5h3l4-4v12L4 9H1zM11 4c1.500 2 1.500 4 0 6M13.500 2.500c2 3 2 6 0 9" /></Ico></TrayIcon>
          <TrayIcon $w={32}><Ico w={17} h={12} c="#333"><path d="M1 1v3M4 1v3M0 4h5v2L2.500 8V11" /><path d="M5 3h11v6H6" /><path d="M7 4h7v4H7z" fill="#333" /></Ico></TrayIcon>
          <TrayIcon $w={38} $mr={4}><Ico w={17} h={17} c="#333"><path d="M5 14L13 2c1-1 3 0 2 2L8 13c-1 1-3 0-2-1l6-9M5 11c-3 0-3 4 0 4" /></Ico></TrayIcon>
          <TrayIcon $w={40}><Ico w={24} h={14} c="#222"><path d="M.5.500h23v13H.5z" /><path d="M3 4h18M3 7h18" strokeDasharray="1 1" /><path d="M6 10h12" /></Ico></TrayIcon>
          <TrayIcon $w={36}>ENG</TrayIcon>
          <Clock>07:51<br />18-10-2023</Clock>
          <TrayIcon $w={34}><Ico w={17} h={16} c="#222"><path d="M.5.500h16v11h-5L8.500 14.500 5.500 11.500h-5z" /></Ico></TrayIcon>
          <ShowDesktop />
        </Tray>
      </Taskbar>
    </>
  );
}

export default function App() {
  return (
    <Page>
      <Global />
      <BrowserChrome />
      <TableauHeader />
      <TopToolbar />
      <Main>
        <DataPanel />
        <MarksCards />
        <ChartView />
      </Main>
      <BottomBars />
    </Page>
  );
}
